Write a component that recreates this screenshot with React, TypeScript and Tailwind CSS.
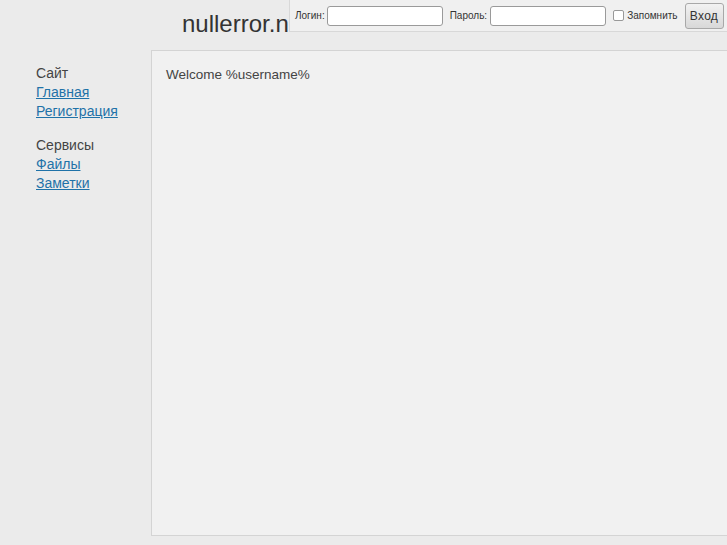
import React from 'react';

const font = { fontFamily: '"Liberation Sans", "DejaVu Sans", sans-serif' };

function LoginBar() {
    return (
        <form className="absolute right-0 top-0 flex h-[32px] w-[438px] items-center border-b border-l border-[#d8d8d8] bg-[#f0f0f0] pl-[5px] text-[10px] text-[#333]">
            <label className="mr-[2px]">Логин:</label>
            <input className="h-[20px] w-[116px] rounded-[3px] border border-[#9a9a9a] bg-white" />
            <label className="ml-[7px] mr-[3px]">Пароль:</label>
            <input type="password" className="h-[20px] w-[116px] rounded-[3px] border border-[#9a9a9a] bg-white" />
            <label className="ml-[7px] flex items-center gap-[3px]">
                <span className="inline-block h-[11px] w-[11px] rounded-[2px] border border-[#999] bg-white" />
                Запомнить
            </label>
            <button
                type="button"
                className="ml-[7px] h-[26px] w-[39px] rounded-[3px] border border-[#a8a8a8] bg-gradient-to-b from-[#f2f2f2] to-[#d8d8d8] text-[12px] tracking-wide text-[#333]"
            >
                Вход
            </button>
        </form>
    );
}

function Sidebar() {
    const groups = [
        { title: 'Сайт', links: ['Главная', 'Регистрация'] },
        { title: 'Сервисы', links: ['Файлы', 'Заметки'] },
    ];
    return (
        <div className="flex w-[151px] shrink-0 flex-col gap-[15px] pl-[36px] pt-[14px] text-[14px] leading-[19px]">
            {groups.map((g) => (
                <div key={g.title}>
                    <div className="text-[#444]">{g.title}</div>
                    {g.links.map((l) => (
                        <div key={l}>
                            <a href="#" className="text-[#1f72a8] underline">
                                {l}
                            </a>
                        </div>
                    ))}
                </div>
            ))}
        </div>
    );
}

export default function App() {
    return (
        <div className="relative h-[545px] w-[727px] overflow-hidden bg-[#ebebeb]" style={font}>
            <header className="h-[50px] w-[289px] overflow-hidden whitespace-nowrap pl-[182px] pt-[9px] text-[24px] leading-[30px] text-[#333]">
                nullerror.net
            </header>
            <LoginBar />
            <div className="flex">
                <Sidebar />
                <main className="h-[486px] flex-1 border border-r-0 border-[#d4d4d4] bg-[#f1f1f1] px-[14px] pt-[14px] text-[13.5px] leading-[19px] text-[#444]">
                    Welcome %username%
                </main>
            </div>
        </div>
    );
}
